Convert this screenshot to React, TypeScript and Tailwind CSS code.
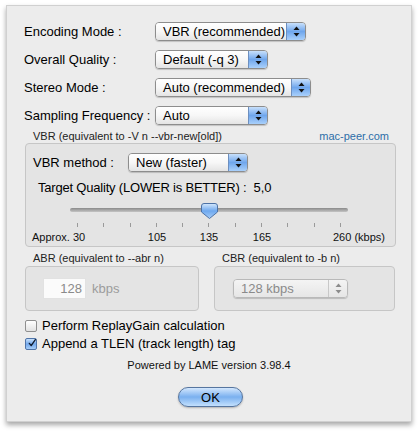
import type { ReactNode } from 'react';

const FONT = { fontFamily: '"Liberation Sans", Arial, sans-serif' };

// Up/down arrows for the Aqua popup buttons
function Arrows({ disabled = false }: { disabled?: boolean }) {
  const fill = disabled ? '#8c8c8c' : '#111';
  return (
    <svg width="7" height="11" viewBox="0 0 7 11">
      <path d="M3.5 0.5 L6.5 4 L0.5 4 Z" fill={fill} />
      <path d="M3.5 10.5 L6.5 7 L0.5 7 Z" fill={fill} />
    </svg>
  );
}

function Popup({
  label,
  width,
  disabled = false,
}: {
  label: string;
  width: string;
  disabled?: boolean;
}) {
  return (
    <div
      className={`${width} h-[19px] flex rounded-[4px] border overflow-hidden shadow-[0_1px_1px_rgba(0,0,0,0.18)] ${
        disabled ? 'border-[#b9b9b9]' : 'border-[#8d8d8d]'
      }`}
    >
      <div
        className={`flex-1 flex items-center pl-[7px] text-[13px] leading-none whitespace-nowrap bg-gradient-to-b ${
          disabled
            ? 'from-[#f4f4f4] to-[#e6e6e6] text-[#8a8a8a]'
            : 'from-white via-[#f7f7f7] to-[#e4e4e4] text-black'
        }`}
      >
        {label}
      </div>
      <div
        className={`w-[19px] flex items-center justify-center border-l bg-gradient-to-b ${
          disabled
            ? 'border-[#c8c8c8] from-[#f4f4f4] to-[#e6e6e6]'
            : 'border-[#6d8fbf] from-[#c8e0fb] via-[#6fa6ec] to-[#a9d0fb]'
        }`}
      >
        <Arrows disabled={disabled} />
      </div>
    </div>
  );
}

function Row({ label, children }: { label: string; children: ReactNode }) {
  return (
    <div className="flex items-center h-[19px]">
      <div className="w-[131px] text-[13px] text-black whitespace-nowrap">{label}</div>
      {children}
    </div>
  );
}

function GroupBox({
  className,
  children,
}: {
  className: string;
  children?: ReactNode;
}) {
  return (
    <div
      className={`rounded-[4px] border border-[#c6c6c6] bg-[#e4e4e4] ${className}`}
    >
      {children}
    </div>
  );
}

function Checkbox({ checked, label }: { checked: boolean; label: string }) {
  return (
    <div className="flex items-center h-[18px]">
      <div
        className={`w-[12px] h-[12px] rounded-[2px] border flex items-center justify-center ${
          checked
            ? 'border-[#4f74a8] bg-gradient-to-b from-[#c7e0fb] via-[#72a8ec] to-[#a6cdf8]'
            : 'border-[#8f8f8f] bg-gradient-to-b from-white to-[#e2e2e2]'
        }`}
      >
        {checked && (
          <svg width="12" height="12" viewBox="0 0 12 12" className="-mt-[3px] ml-[2px]">
            <path
              d="M2 6.5 L4.8 10 L11 1"
              fill="none"
              stroke="#0e1a2e"
              strokeWidth="2"
              strokeLinecap="round"
              strokeLinejoin="round"
            />
          </svg>
        )}
      </div>
      <span className="ml-[5px] text-[13px] text-black">{label}</span>
    </div>
  );
}

const TICKS = Array.from({ length: 11 });

// tick centres relative to the slider track
const SCALE = [
  { text: 'Approx. 30', left: 'left-[-38px]', center: false },
  { text: '105', left: 'left-[87px]', center: true },
  { text: '135', left: 'left-[139px]', center: true },
  { text: '165', left: 'left-[192px]', center: true },
  { text: '260 (kbps)', left: 'left-[263px]', center: false },
];

export default function App() {
  return (
    <div className="w-[420px] h-[433px] bg-white pt-[5px] pl-[6px]" style={FONT}>
      <div className="w-[406px] h-[417px] bg-[#ececec] border border-[#d0d0d0] shadow-[0_3px_5px_rgba(0,0,0,0.35)] flex flex-col">
        {/* main settings */}
        <div className="pt-[16px] pl-[17px] flex flex-col gap-[9px]">
          <Row label="Encoding Mode :">
            <Popup label="VBR (recommended)" width="w-[151px]" />
          </Row>
          <Row label="Overall Quality :">
            <Popup label="Default (-q 3)" width="w-[113px]" />
          </Row>
          <Row label="Stereo Mode :">
            <Popup label="Auto (recommended)" width="w-[156px]" />
          </Row>
          <Row label="Sampling Frequency :">
            <Popup label="Auto" width="w-[113px]" />
          </Row>
        </div>

        {/* VBR group */}
        <div className="mt-[5px] flex items-center justify-between pl-[26px] pr-[22px] h-[13px] text-[11px] leading-none">
          <span className="text-[#222]">VBR (equivalent to -V n --vbr-new[old])</span>
          <span className="text-[#2c6ea8]">mac-peer.com</span>
        </div>
        <GroupBox className="ml-[18px] w-[371px] h-[104px] flex flex-col">
          <div className="mt-[9px] ml-[7px] flex items-center h-[19px]">
            <span className="w-[95px] text-[13px] text-black whitespace-nowrap">VBR method :</span>
            <Popup label="New (faster)" width="w-[120px]" />
          </div>
          <div className="mt-[8px] ml-[12px] flex items-center h-[16px] text-[13px] text-black whitespace-nowrap">
            <span className="shrink-0 tracking-[-0.2px]">Target Quality (LOWER is BETTER) :</span>
            <span className="ml-[7px]">5,0</span>
          </div>
          <div className="relative mt-[5px] ml-[44px] w-[278px] h-[30px]">
            <div className="absolute top-[7px] left-0 right-0 h-[4px] rounded-full bg-gradient-to-b from-[#8a8a8a] to-[#c4c4c4]" />
            <div className="absolute top-[22px] left-0 right-0 px-[7px] flex justify-between">
              {TICKS.map((_, i) => (
                <div key={i} className="w-px h-[4px] bg-[#9a9a9a]" />
              ))}
            </div>
            {/* thumb */}
            <svg
              className="absolute left-[131px] top-[2px]"
              width="17"
              height="16"
              viewBox="0 0 17 16"
            >
              <defs>
                <linearGradient id="thumb" x1="0" y1="0" x2="0" y2="1">
                  <stop offset="0" stopColor="#d6e9fd" />
                  <stop offset="0.5" stopColor="#6ea8ee" />
                  <stop offset="1" stopColor="#a7cdf8" />
                </linearGradient>
              </defs>
              <path
                d="M3 0.5 H14 Q16.5 0.5 16.5 3 V9 L8.5 15.5 L0.5 9 V3 Q0.5 0.5 3 0.5 Z"
                fill="url(#thumb)"
                stroke="#4d72a6"
              />
            </svg>
          </div>
          <div className="relative ml-[44px] w-[278px] h-[13px] text-[11px] leading-[13px] text-[#111]">
            {SCALE.map((s) => (
              <span
                key={s.text}
                className={`absolute top-0 whitespace-nowrap ${s.left} ${s.center ? '-translate-x-1/2' : ''}`}
              >
                {s.text}
              </span>
            ))}
          </div>
        </GroupBox>

        {/* ABR / CBR groups */}
        <div className="mt-[6px] ml-[26px] flex h-[13px] text-[11px] leading-none text-[#222]">
          <span className="w-[189px]">ABR (equivalent to --abr n)</span>
          <span>CBR (equivalent to -b n)</span>
        </div>
        <div className="ml-[18px] flex gap-[15px]">
          <GroupBox className="w-[174px] h-[45px] pl-[17px] pt-[11px]">
            <div className="flex items-center">
              <div className="w-[43px] h-[21px] bg-[#fbfbfb] border border-[#e2e2e2] flex items-center justify-end pr-[3px] text-[13px] text-[#8a8a8a]">
                128
              </div>
              <span className="ml-[6px] text-[13px] text-[#9c9c9c]">kbps</span>
            </div>
          </GroupBox>
          <GroupBox className="w-[181px] h-[45px] pl-[18px] pt-[12px]">
            <Popup label="128 kbps" width="w-[115px]" disabled />
          </GroupBox>
        </div>

        {/* options */}
        <div className="mt-[6px] ml-[18px] flex flex-col">
          <Checkbox checked={false} label="Perform ReplayGain calculation" />
          <Checkbox checked label="Append a TLEN (track length) tag" />
        </div>

        <div className="mt-[6px] text-center text-[11px] leading-[13px] text-[#111]">
          Powered by LAME version 3.98.4
        </div>

        <div className="mt-[15px] flex justify-center pl-[3px]">
          <button className="w-[65px] h-[20px] rounded-full border border-[#56759f] bg-gradient-to-b from-[#d3e7fd] via-[#7ab0ef] to-[#c3e0fd] text-[13px] leading-none text-black shadow-[0_1px_2px_rgba(0,0,0,0.25)]">
            OK
          </button>
        </div>
      </div>
    </div>
  );
}
